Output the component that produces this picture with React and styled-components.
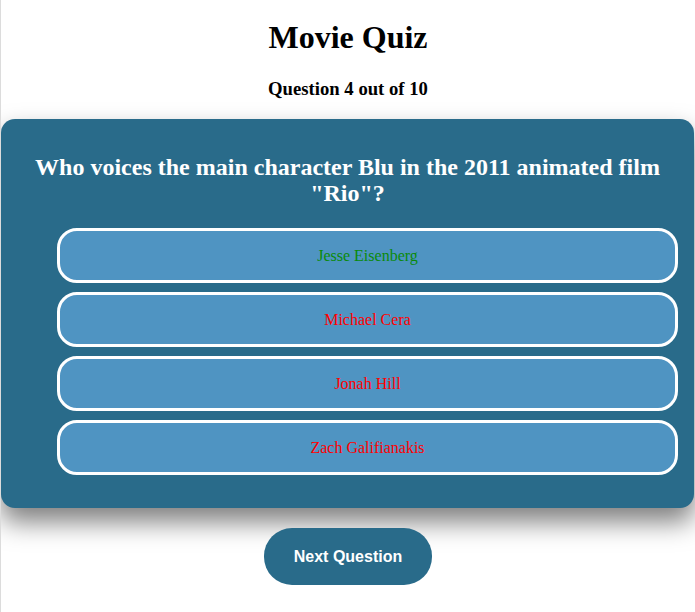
import React from "react";
import styled, { createGlobalStyle } from "styled-components";

const Global = createGlobalStyle`
  html, body { margin: 0; padding: 0; background: #fff; }
  body { font-family: "Liberation Serif", "Times New Roman", serif; border-left: 1px solid #dcdcdc; min-height: 612px; box-sizing: border-box; }
`;

const Page = styled.div`
  display: flex;
  flex-direction: column;
  align-items: center;
  padding-top: 19px;
`;

const Title = styled.h1`
  margin: 0;
  font-size: 32px;
  line-height: 37px;
  font-weight: bold;
  color: #000;
`;

const Counter = styled.h3`
  margin: 22px 0 0;
  font-size: 18.7px;
  line-height: 22px;
  font-weight: bold;
  color: #000;
`;

const Card = styled.div`
  align-self: stretch;
  margin: 19px 1px 0 0;
  background: #296b8a;
  border-radius: 14px;
  box-shadow: 0 14px 26px rgba(0, 0, 0, 0.5);
  padding: 35px 16px 33px 56px;
  display: flex;
  flex-direction: column;
  gap: 9px;
`;

const Question = styled.h2`
  margin: 0 -16px 13px -56px;
  padding: 0 30px;
  font-size: 24px;
  line-height: 26px;
  font-weight: bold;
  color: #fff;
  text-align: center;
`;

const Option = styled.button`
  display: flex;
  align-items: center;
  justify-content: center;
  height: 55px;
  background: #4f94c2;
  border: 3px solid #fff;
  border-radius: 20px;
  font-family: "Liberation Serif", "Times New Roman", serif;
  font-size: 16px;
  color: ${(p) => (p.$correct ? "#0a8a0a" : "#ff0000")};
  cursor: pointer;
`;

const Next = styled.button`
  margin-top: 20px;
  width: 168px;
  height: 57px;
  border: none;
  border-radius: 28px;
  background: #296b8a;
  color: #fff;
  font-family: "Liberation Sans", Arial, sans-serif;
  font-weight: bold;
  font-size: 16px;
  cursor: pointer;
`;

const options = [
  { text: "Jesse Eisenberg", correct: true },
  { text: "Michael Cera" },
  { text: "Jonah Hill" },
  { text: "Zach Galifianakis" },
];

export default function App() {
  return (
    <>
      <Global />
      <Page>
        <Title>Movie Quiz</Title>
        <Counter>Question 4 out of 10</Counter>
        <Card>
          <Question>
            Who voices the main character Blu in the 2011 animated film "Rio"?
          </Question>
          {options.map((o) => (
            <Option key={o.text} $correct={o.correct}>
              {o.text}
            </Option>
          ))}
        </Card>
        <Next>Next Question</Next>
      </Page>
    </>
  );
}
